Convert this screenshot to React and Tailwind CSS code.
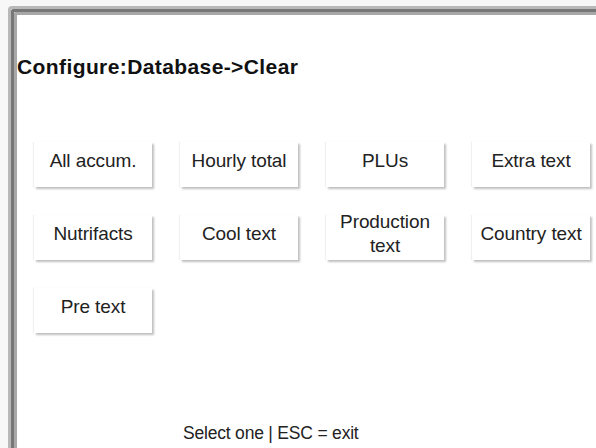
import React from 'react';

const rows = [
  ['All accum.', 'Hourly total', 'PLUs', 'Extra text'],
  ['Nutrifacts', 'Cool text', 'Production text', 'Country text'],
  ['Pre text'],
];

function KeyButton({ label }) {
  return (
    <div className="w-[118px] h-[45px] bg-white flex items-center justify-center text-center pb-[8px] leading-[24px] text-[19px] tracking-[-0.1px] text-[#222] shadow-[2px_2px_2px_rgba(0,0,0,0.25),-1px_0_1px_rgba(0,0,0,0.06)]">
      {label === 'Production text' ? (
        <span>
          Production
          <br />
          text
        </span>
      ) : (
        label
      )}
    </div>
  );
}

export default function App() {
  return (
    <div
      className="w-[596px] h-[448px] bg-[#f7f7f7] pl-[8px] pt-[6px] overflow-hidden"
      style={{ fontFamily: '"Liberation Sans", Arial, sans-serif' }}
    >
      <div className="h-full border-l-[3px] border-t-[3px] border-[#b8b8b8] rounded-tl-[4px]">
        <div className="h-full border-l-[3px] border-t-[3px] border-[#777777] rounded-tl-[3px]">
          <div className="h-full border-l-[3px] border-t-[3px] border-[#a8a8a8] rounded-tl-[2px] bg-white flex flex-col">
            <div className="mt-[41px] text-[21px] leading-[21px] font-bold tracking-[0.4px] text-[#111]">
              Configure:Database-&gt;Clear
            </div>
            <div className="mt-[65px] pl-[17px] flex flex-col gap-[28px]">
              {rows.map((row, i) => (
                <div key={i} className="flex gap-[28px]">
                  {row.map((label) => (
                    <KeyButton key={label} label={label} />
                  ))}
                </div>
              ))}
            </div>
            <div className="mt-auto mb-[6px] pl-[166px] text-[17.5px] leading-[18px] tracking-[-0.2px] text-[#222]">
              Select one | ESC = exit
            </div>
          </div>
        </div>
      </div>
    </div>
  );
}
